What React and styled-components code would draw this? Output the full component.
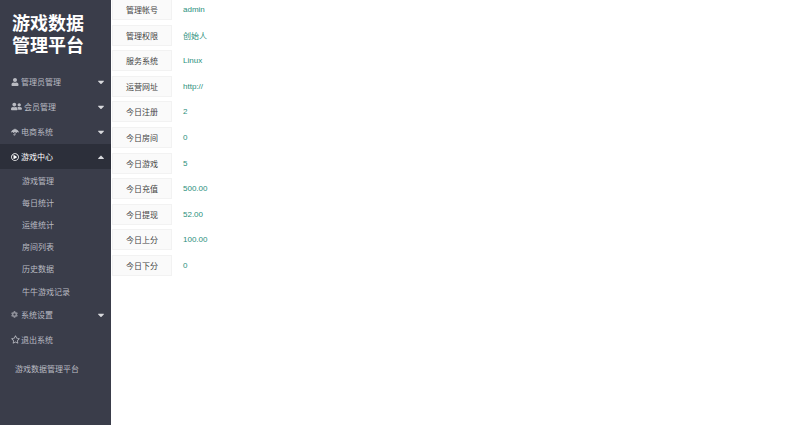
import styled, { createGlobalStyle } from "styled-components";
import { FaUser, FaUserFriends, FaUmbrella, FaRegPlayCircle, FaCog, FaRegStar, FaCaretDown, FaCaretUp } from "react-icons/fa";

const GlobalStyle = createGlobalStyle`
  html, body {
    margin: 0;
    padding: 0;
    height: 100%;
    background: #fff;
    font-family: "Liberation Sans", "Noto Sans CJK SC", sans-serif;
  }
  * {
    box-sizing: border-box;
  }
`;

const Page = styled.div`
  display: flex;
  width: 800px;
  height: 425px;
  overflow: hidden;
`;

const Sidebar = styled.aside`
  width: 111px;
  flex: none;
  background: #3a3d4a;
  color: #b9bbc2;
`;

const Logo = styled.h1`
  margin: 0;
  height: 69px;
  padding: 13px 0 0 12px;
  font-size: 18px;
  line-height: 22px;
  font-weight: bold;
  color: #fff;
`;

const MenuItem = styled.div`
  display: flex;
  align-items: center;
  height: 25px;
  padding: 0 4px 0 11px;
  font-size: 8px;
  background: ${(p) => (p.$active ? "#2c2f3a" : "transparent")};
  color: ${(p) => (p.$active ? "#fff" : "#b9bbc2")};
`;

const MenuIcon = styled.span`
  display: flex;
  align-items: center;
  width: ${(p) => p.$width || 10}px;
  font-size: ${(p) => p.$size || 8}px;
  color: ${(p) => p.$color || "inherit"};
`;

const MenuLabel = styled.span`
  flex: 1;
`;

const Caret = styled.span`
  display: flex;
  font-size: 10px;
  margin-right: 1px;
  color: #d8d9dd;
`;

const SubItem = styled.div`
  display: flex;
  align-items: center;
  height: 22.2px;
  padding-left: 22px;
  font-size: 8px;
  color: #b9bbc2;
`;

const FooterText = styled.div`
  margin-top: 6px;
  padding-left: 15px;
  font-size: 8px;
  line-height: 24px;
  color: #b9bbc2;
`;

const Content = styled.main`
  flex: 1;
  margin-top: -3px;
`;

const Row = styled.div`
  display: flex;
  align-items: center;
  height: 25.55px;
`;

const RowLabel = styled.div`
  width: 60px;
  height: 21px;
  margin-left: 1px;
  display: flex;
  align-items: center;
  justify-content: center;
  background: #fafafa;
  border: 1px solid #f2f2f2;
  font-size: 8px;
  color: #444;
`;

const RowValue = styled.div`
  margin-left: 11px;
  font-size: 8px;
  color: #2a8f7c;
`;

const rows = [
  ["管理帐号", "admin"],
  ["管理权限", "创始人"],
  ["服务系统", "Linux"],
  ["运营网址", "http://"],
  ["今日注册", "2"],
  ["今日房间", "0"],
  ["今日游戏", "5"],
  ["今日充值", "500.00"],
  ["今日提现", "52.00"],
  ["今日上分", "100.00"],
  ["今日下分", "0"],
];

const subItems = ["游戏管理", "每日统计", "运维统计", "房间列表", "历史数据", "牛牛游戏记录"];

export default function App() {
  return (
    <Page>
      <GlobalStyle />
      <Sidebar>
        <Logo>
          游戏数据
          <br />
          管理平台
        </Logo>
        <MenuItem>
          <MenuIcon><FaUser /></MenuIcon>
          <MenuLabel>管理员管理</MenuLabel>
          <Caret><FaCaretDown /></Caret>
        </MenuItem>
        <MenuItem>
          <MenuIcon $width={13} $size={11}><FaUserFriends /></MenuIcon>
          <MenuLabel>会员管理</MenuLabel>
          <Caret><FaCaretDown /></Caret>
        </MenuItem>
        <MenuItem>
          <MenuIcon><FaUmbrella /></MenuIcon>
          <MenuLabel>电商系统</MenuLabel>
          <Caret><FaCaretDown /></Caret>
        </MenuItem>
        <MenuItem $active>
          <MenuIcon><FaRegPlayCircle /></MenuIcon>
          <MenuLabel>游戏中心</MenuLabel>
          <Caret><FaCaretUp /></Caret>
        </MenuItem>
        {subItems.map((s) => (
          <SubItem key={s}>{s}</SubItem>
        ))}
        <MenuItem>
          <MenuIcon $size={7} $color="#8f919a"><FaCog /></MenuIcon>
          <MenuLabel>系统设置</MenuLabel>
          <Caret><FaCaretDown /></Caret>
        </MenuItem>
        <MenuItem>
          <MenuIcon $size={9}><FaRegStar /></MenuIcon>
          <MenuLabel>退出系统</MenuLabel>
        </MenuItem>
        <FooterText>游戏数据管理平台</FooterText>
      </Sidebar>
      <Content>
        {rows.map(([label, value]) => (
          <Row key={label}>
            <RowLabel>{label}</RowLabel>
            <RowValue>{value}</RowValue>
          </Row>
        ))}
      </Content>
    </Page>
  );
}
